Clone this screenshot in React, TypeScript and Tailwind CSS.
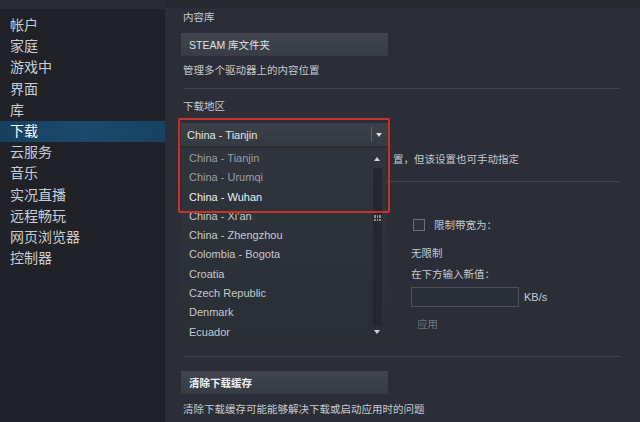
import React from "react";

const F = "font-['Liberation_Sans','Noto_Sans_CJK_SC',sans-serif]";

const navItems = ["帐户", "家庭", "游戏中", "界面", "库", "下载", "云服务", "音乐", "实况直播", "远程畅玩", "网页浏览器", "控制器"];

const regions = [
  { t: "China - Tianjin", c: "text-[#9a9fa6]" },
  { t: "China - Urumqi", c: "text-[#9a9fa6]" },
  { t: "China - Wuhan", c: "text-[#eef0f2]" },
  { t: "China - Xi'an", c: "text-[#c4c8ce]" },
  { t: "China - Zhengzhou", c: "text-[#c4c8ce]" },
  { t: "Colombia - Bogota", c: "text-[#c4c8ce]" },
  { t: "Croatia", c: "text-[#c4c8ce]" },
  { t: "Czech Republic", c: "text-[#c4c8ce]" },
  { t: "Denmark", c: "text-[#c4c8ce]" },
  { t: "Ecuador", c: "text-[#c4c8ce]" },
];

export default function App() {
  return (
    <div className={`${F} w-[640px] h-[422px] flex overflow-hidden bg-[#2b2e36] relative`}>
      {/* Sidebar */}
      <div className="w-[165px] h-full bg-[#202227] flex flex-col">
        <div className="h-[9px] bg-[#2a2c32]" />
        <div className="pt-[6px] flex flex-col">
          {navItems.map((n) => (
            <div
              key={n}
              className={`h-[21.2px] leading-[21.2px] text-[14px] pl-[10px] ${
                n === "下载"
                  ? "bg-gradient-to-r from-[#17405f] via-[#1a4a6c] to-[#174262] text-white"
                  : "text-[#c9cdd3]"
              }`}
            >
              {n}
            </div>
          ))}
        </div>
      </div>

      {/* Content */}
      <div className="flex-1 h-full flex flex-col relative">
        <div className="h-[8px] bg-[#25282e] absolute top-0 left-0 right-0" />
        <div className="pl-[16px] pt-[10px] flex flex-col text-[10.5px] leading-[14px] text-[#c5c9cf]">
          <div className="pl-[2px]">内容库</div>
          <div className="mt-[9px] w-[207px] h-[23px] bg-gradient-to-b from-[#40454e] to-[#373c45] flex items-center pl-[8px] text-[#dfe2e6]">
            STEAM 库文件夹
          </div>
          <div className="mt-[7px] pl-[2px]">管理多个驱动器上的内容位置</div>
          <div className="mt-[11px] ml-[2px] w-[437px] h-[1px] bg-[#3f444d]" />
          <div className="mt-[10px] pl-[2px]">下载地区</div>
          <div className="mt-[10px] w-[207px] h-[23px] bg-gradient-to-b from-[#3b4049] to-[#343942] flex items-center pl-[6px] text-[#e3e6ea] text-[11px] relative">
            China - Tianjin
            <div className="absolute left-[190px] top-[4px] w-[1px] h-[15px] bg-[#5c616a]" />
            <div className="absolute left-[195px] top-[10px] w-0 h-0 border-l-[3.5px] border-r-[3.5px] border-t-[4px] border-l-transparent border-r-transparent border-t-[#d8dbe0]" />
          </div>
          <div className="mt-[6px] pl-[2px] whitespace-nowrap">
            <span className="invisible">下载地区会根据您的网络连接自动检测最佳位</span>置，但该设置也可手动指定
          </div>
          <div className="mt-[15px] ml-[2px] w-[437px] h-[1px] bg-[#3f444d]" />

          <div className="flex">
            <div className="w-[230px]" />
            <div className="flex flex-col">
              <div className="mt-[36px] flex items-center">
                <div className="ml-[2px] w-[12px] h-[12px] border border-[#6b7079] bg-[#2e323a]" />
                <span className="ml-[9px]">限制带宽为：</span>
              </div>
              <div className="mt-[14px]">无限制</div>
              <div className="mt-[7px]">在下方输入新值：</div>
              <div className="mt-[6px] flex items-center">
                <div className="w-[108px] h-[20px] bg-[#2a2e36] border border-[#4b5059]" />
                <span className="ml-[5px] text-[11px]">KB/s</span>
              </div>
              <div className="mt-[10px] pl-[6px] text-[#6f747c]">应用</div>
            </div>
          </div>

          <div className="mt-[25px] ml-[2px] w-[437px] h-[1px] bg-[#3f444d]" />
          <div className="mt-[14px] w-[207px] h-[23px] bg-gradient-to-b from-[#40454e] to-[#363b44] flex items-center pl-[8px] text-[#eef0f2] font-bold">
            清除下载缓存
          </div>
          <div className="mt-[8px] pl-[2px]">清除下载缓存可能能够解决下载或启动应用时的问题</div>
        </div>

        {/* Dropdown list overlay */}
        <div className="absolute left-[16px] top-[148px] w-[206px] h-[192px] bg-gradient-to-b from-[#30343c] to-[#2a2e35] pt-[1px] text-[11px]">
          {regions.map((r) => (
            <div key={r.t} className={`h-[19.3px] leading-[19.3px] pl-[8px] ${r.c}`}>
              {r.t}
            </div>
          ))}
          {/* scrollbar */}
          <div className="absolute left-[192px] top-[20px] w-[9px] h-[158px] bg-[#24272c]" />
          <div className="absolute left-[193px] top-[9px] w-0 h-0 border-l-[3.5px] border-r-[3.5px] border-b-[4px] border-l-transparent border-r-transparent border-b-[#d0d3d8]" />
          <div className="absolute left-[193px] top-[67px] w-[7px] h-[6px] grid grid-cols-3 gap-[1px]">
            {Array.from({ length: 6 }).map((_, i) => (
              <div key={i} className="bg-[#8d9299]" />
            ))}
          </div>
          <div className="absolute left-[193px] top-[182px] w-0 h-0 border-l-[3.5px] border-r-[3.5px] border-t-[4px] border-l-transparent border-r-transparent border-t-[#d0d3d8]" />
        </div>

        {/* Red highlight */}
        <div className="absolute left-[13px] top-[118px] w-[212px] h-[95px] border-2 border-[#c8302b] rounded-[2px]" />
      </div>
    </div>
  );
}
